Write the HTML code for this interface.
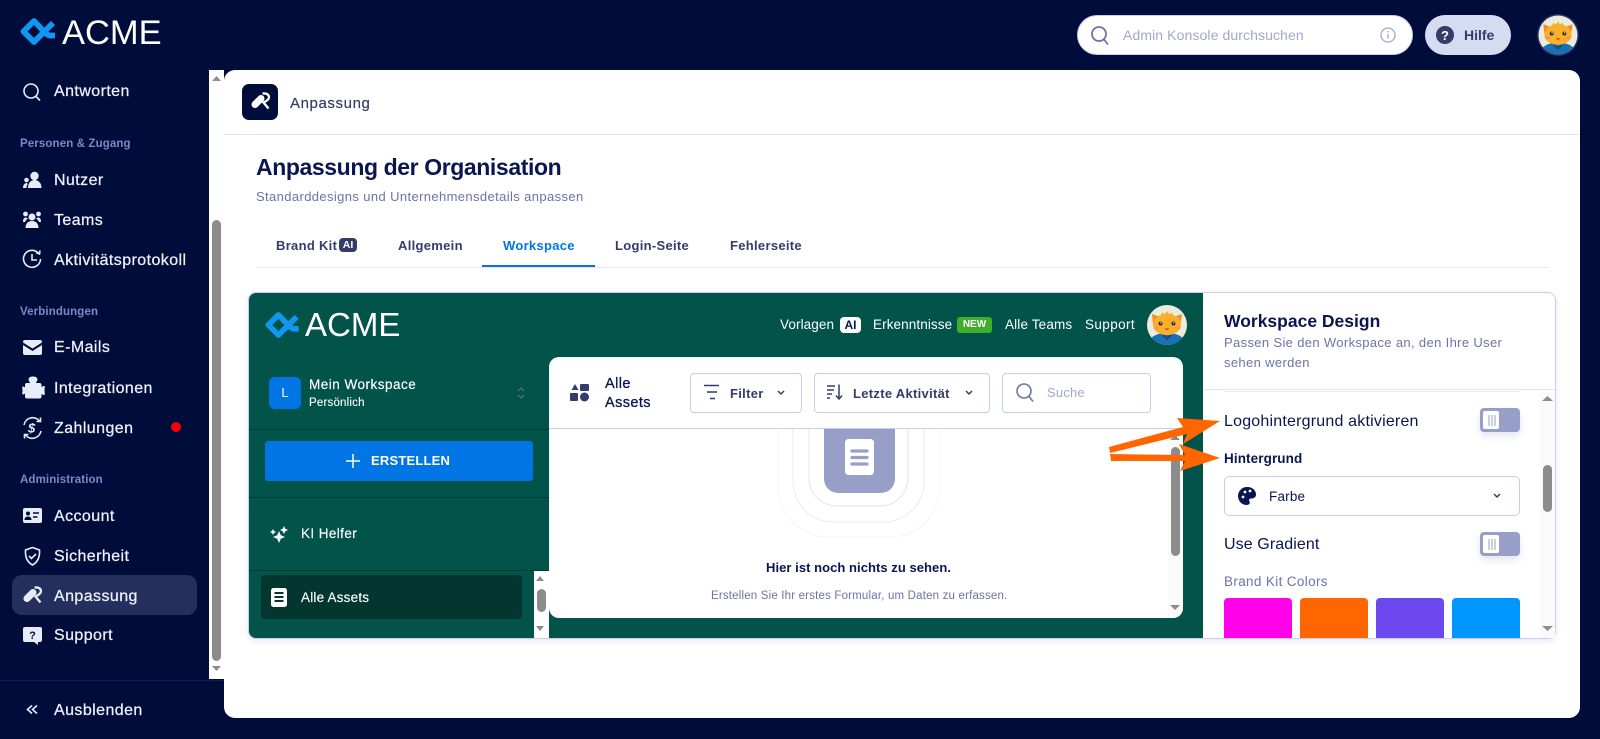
<!DOCTYPE html>
<html lang="de"><head><meta charset="utf-8"><title>Anpassung</title>
<style>
*{box-sizing:border-box}
html,body{margin:0;padding:0;width:1600px;height:739px;overflow:hidden;background:#000c3a;font-family:"Liberation Sans",sans-serif}
.b{position:absolute}
.t{position:absolute;white-space:nowrap;line-height:20px;height:20px}
.n{color:#eef0fa;font-size:16px;letter-spacing:.42px;left:54px;-webkit-text-stroke:.25px #eef0fa}
.s{color:#7d88c9;font-size:11.5px;font-weight:bold;left:20px;letter-spacing:.12px}
.tab{font-size:13px;font-weight:bold;color:#343c6a;letter-spacing:.3px}
.w{color:#fff;font-size:13.5px}
svg.o{position:absolute;left:0;top:0;z-index:5}
</style></head><body>
<!-- main card -->
<div class="b" style="left:224px;top:70px;width:1356px;height:648px;background:#fff;border-radius:11px"></div>
<div class="b" style="left:224px;top:134px;width:1356px;height:1px;background:#e3e7f5"></div>
<div class="b" style="left:209px;top:70px;width:15px;height:609px;background:#fff"></div>
<div class="b" style="left:212px;top:220px;width:9px;height:441px;background:#8c8c8c;border-radius:5px"></div>
<div class="b" style="left:12px;top:575px;width:185px;height:40px;background:#232f5c;border-radius:10px"></div>
<div class="b" style="left:0;top:680px;width:224px;height:1px;background:#0f1c54"></div>
<div class="b" style="left:171px;top:422px;width:10px;height:10px;background:#f00;border-radius:50%"></div>

<!-- sidebar text -->
<div class="t" style="left:62px;top:13px;height:40px;line-height:40px;font-size:34.5px;color:#fff">ACME</div>
<div class="t n" style="top:82px">Antworten</div>
<div class="t s" style="top:134px">Personen &amp; Zugang</div>
<div class="t n" style="top:171px">Nutzer</div>
<div class="t n" style="top:211px">Teams</div>
<div class="t n" style="top:251px">Aktivitätsprotokoll</div>
<div class="t s" style="top:302px">Verbindungen</div>
<div class="t n" style="top:338px">E-Mails</div>
<div class="t n" style="top:379px">Integrationen</div>
<div class="t n" style="top:419px">Zahlungen</div>
<div class="t s" style="top:470px">Administration</div>
<div class="t n" style="top:507px">Account</div>
<div class="t n" style="top:547px">Sicherheit</div>
<div class="t n" style="top:587px">Anpassung</div>
<div class="t n" style="top:626px">Support</div>
<div class="t n" style="top:701px">Ausblenden</div>

<!-- top bar -->
<div class="b" style="left:1077px;top:15px;width:336px;height:40px;background:#fff;border-radius:20px;border:1px solid #c5ceee"></div>
<div class="t" style="left:1123px;top:25px;font-size:14px;color:#a0a8ce;letter-spacing:.1px">Admin Konsole durchsuchen</div>
<div class="b" style="left:1425px;top:15px;width:86px;height:40px;background:#d5dcf1;border-radius:20px"></div>
<div class="t" style="left:1464px;top:25px;font-size:14px;font-weight:bold;color:#343c6a">Hilfe</div>

<!-- card header -->
<div class="b" style="left:242px;top:84px;width:36px;height:36px;background:#000c3a;border-radius:7px"></div>
<div class="t" style="left:290px;top:94px;font-size:15px;color:#343c6a;letter-spacing:.6px;-webkit-text-stroke:.2px #343c6a">Anpassung</div>
<div class="t" style="left:256px;top:153px;height:28px;line-height:28px;font-size:23px;font-weight:bold;color:#0a1551;letter-spacing:-.4px">Anpassung der Organisation</div>
<div class="t" style="left:256px;top:187px;font-size:13px;color:#6c73a8;letter-spacing:.38px">Standarddesigns und Unternehmensdetails anpassen</div>
<div class="t tab" style="left:276px;top:236px">Brand Kit</div>
<div class="b" style="left:339px;top:238px;width:18px;height:14px;background:#343c6a;border-radius:4px;color:#fff;font:bold 10.5px/14px 'Liberation Sans',sans-serif;text-align:center">AI</div>
<div class="t tab" style="left:398px;top:236px">Allgemein</div>
<div class="t tab" style="left:503px;top:236px;color:#0075e3">Workspace</div>
<div class="t tab" style="left:615px;top:236px">Login-Seite</div>
<div class="t tab" style="left:730px;top:236px">Fehlerseite</div>
<div class="b" style="left:256px;top:267px;width:1292px;height:1px;background:#e3e7f5"></div>
<div class="b" style="left:482px;top:265px;width:113px;height:2px;background:#0075e3"></div>

<!-- embedded preview -->
<div class="b" style="left:248px;top:292px;width:1308px;height:347px;background:#fff;border:1px solid #c8ceed;border-radius:8px;box-shadow:0 2px 6px rgba(120,130,190,.18)"></div>
<div class="b" style="left:249px;top:293px;width:954px;height:345px;background:#02544a;border-radius:7px 0 0 7px"></div>
<div class="b" style="left:249px;top:429px;width:300px;height:1px;background:#023a33"></div>
<div class="b" style="left:249px;top:497px;width:300px;height:1px;background:#023a33"></div>
<div class="b" style="left:249px;top:570px;width:300px;height:1px;background:#023a33"></div>
<div class="t" style="left:305px;top:305px;height:40px;line-height:40px;font-size:33px;color:#fff">ACME</div>
<div class="t w" style="left:780px;top:315px;letter-spacing:.1px">Vorlagen</div>
<div class="b" style="left:840px;top:317px;width:21px;height:16px;background:#fff;border-radius:4px;color:#0a1551;font:bold 12px/16px 'Liberation Sans',sans-serif;text-align:center">AI</div>
<div class="t w" style="left:873px;top:315px;letter-spacing:.1px">Erkenntnisse</div>
<div class="b" style="left:957px;top:317px;width:35px;height:16px;background:#3faf2a;border-radius:3px;color:#fff;font:bold 10px/16px 'Liberation Sans',sans-serif;text-align:center">NEW</div>
<div class="t w" style="left:1005px;top:315px;letter-spacing:.15px">Alle Teams</div>
<div class="t w" style="left:1085px;top:315px;letter-spacing:.4px">Support</div>
<div class="b" style="left:269px;top:377px;width:32px;height:32px;background:#0075e3;border-radius:6px;color:#fff;font:13px/32px 'Liberation Sans',sans-serif;text-align:center">L</div>
<div class="t" style="left:309px;top:375px;font-size:13.5px;color:#fff;letter-spacing:.5px;-webkit-text-stroke:.15px #fff">Mein Workspace</div>
<div class="t" style="left:309px;top:393px;font-size:11.5px;color:#fff;letter-spacing:.2px;-webkit-text-stroke:.1px #fff">Persönlich</div>
<div class="b" style="left:265px;top:441px;width:268px;height:40px;background:#0075e3;border-radius:3px"></div>
<div class="t" style="left:371px;top:451px;font-size:13px;font-weight:bold;color:#fff;letter-spacing:.2px">ERSTELLEN</div>
<div class="t" style="left:301px;top:524px;font-size:13.5px;color:#fff;letter-spacing:.4px;-webkit-text-stroke:.15px #fff">KI Helfer</div>
<div class="b" style="left:261px;top:575px;width:261px;height:44px;background:#03362e;border-radius:4px"></div>
<div class="t" style="left:301px;top:588px;font-size:13.5px;color:#fff;letter-spacing:.2px;-webkit-text-stroke:.15px #fff">Alle Assets</div>
<div class="b" style="left:534px;top:571px;width:15px;height:67px;background:#fff"></div>
<div class="b" style="left:537px;top:589px;width:9px;height:23px;background:#8c8c8c;border-radius:5px"></div>

<!-- white inner panel -->
<div class="b" style="left:549px;top:357px;width:634px;height:261px;background:#fff;border-radius:10px"></div>
<div class="b" style="left:549px;top:428px;width:634px;height:1px;background:#c5ceee"></div>
<div class="b" style="left:1168px;top:429px;width:15px;height:189px;background:#fafafa;border-radius:0 0 10px 0"></div>
<div class="b" style="left:1171px;top:447px;width:9px;height:109px;background:#8c8c8c;border-radius:5px"></div>
<div class="t" style="left:605px;top:374px;font-size:14.5px;color:#0a1551;letter-spacing:.4px;-webkit-text-stroke:.3px #0a1551">Alle</div>
<div class="t" style="left:605px;top:393px;font-size:14.5px;color:#0a1551;letter-spacing:.4px;-webkit-text-stroke:.3px #0a1551">Assets</div>
<div class="b" style="left:690px;top:373px;width:112px;height:40px;border:1px solid #c5ceee;border-radius:4px"></div>
<div class="t tab" style="left:730px;top:384px">Filter</div>
<div class="b" style="left:814px;top:373px;width:176px;height:40px;border:1px solid #c5ceee;border-radius:4px"></div>
<div class="t tab" style="left:853px;top:384px">Letzte Aktivität</div>
<div class="b" style="left:1002px;top:373px;width:149px;height:40px;border:1px solid #c5ceee;border-radius:4px"></div>
<div class="t" style="left:1047px;top:383px;font-size:13px;color:#a0a8ce;letter-spacing:.2px">Suche</div>
<div class="t" style="left:766px;top:558px;font-size:13px;font-weight:bold;color:#0a1551;letter-spacing:.05px">Hier ist noch nichts zu sehen.</div>
<div class="t" style="left:711px;top:586px;font-size:11.5px;color:#6c73a8;letter-spacing:.18px">Erstellen Sie Ihr erstes Formular, um Daten zu erfassen.</div>

<!-- right panel -->
<div class="t" style="left:1224px;top:311px;font-size:17.5px;font-weight:bold;color:#0a1551">Workspace Design</div>
<div class="t" style="left:1224px;top:333px;font-size:13px;color:#6c73a8;letter-spacing:.35px">Passen Sie den Workspace an, den Ihre User</div>
<div class="t" style="left:1224px;top:353px;font-size:13px;color:#6c73a8;letter-spacing:.35px">sehen werden</div>
<div class="b" style="left:1204px;top:389px;width:351px;height:1px;background:#dfe3f5"></div>
<div class="b" style="left:1224px;top:391px;width:296px;height:1px;background:#e8ebf6"></div>
<div class="b" style="left:1540px;top:392px;width:15px;height:246px;background:#fafafa"></div>
<div class="b" style="left:1543px;top:465px;width:9px;height:47px;background:#8c8c8c;border-radius:5px"></div>
<div class="t" style="left:1224px;top:412px;font-size:16px;color:#0a1551;letter-spacing:.2px">Logohintergrund aktivieren</div>
<div class="b" style="left:1480px;top:408px;width:40px;height:24px;background:#979fc9;border-radius:4px;box-shadow:0 4px 8px rgba(120,130,190,.2)"></div>
<div class="b" style="left:1483px;top:411px;width:16px;height:18px;background:#fff;border-radius:2px"></div>
<div class="t" style="left:1224px;top:449px;font-size:13.5px;font-weight:bold;color:#0a1551;letter-spacing:.1px">Hintergrund</div>
<div class="b" style="left:1224px;top:476px;width:296px;height:40px;border:1px solid #c5ceee;border-radius:5px;background:#fff"></div>
<div class="t" style="left:1269px;top:487px;font-size:13.5px;color:#0a1551;letter-spacing:.2px">Farbe</div>
<div class="t" style="left:1224px;top:535px;font-size:16px;color:#0a1551;letter-spacing:.1px">Use Gradient</div>
<div class="b" style="left:1480px;top:532px;width:40px;height:24px;background:#979fc9;border-radius:4px;box-shadow:0 4px 8px rgba(120,130,190,.2)"></div>
<div class="b" style="left:1483px;top:535px;width:16px;height:18px;background:#fff;border-radius:2px"></div>
<div class="t" style="left:1224px;top:572px;font-size:13.5px;color:#6c73a8;letter-spacing:.35px">Brand Kit Colors</div>
<div class="b" style="left:1224px;top:598px;width:68px;height:40px;background:#ff00e8;border-radius:4px 4px 0 0"></div>
<div class="b" style="left:1300px;top:598px;width:68px;height:40px;background:#ff6600;border-radius:4px 4px 0 0"></div>
<div class="b" style="left:1376px;top:598px;width:68px;height:40px;background:#6c48ee;border-radius:4px 4px 0 0"></div>
<div class="b" style="left:1452px;top:598px;width:68px;height:40px;background:#0096ff;border-radius:4px 4px 0 0"></div>

<svg class="o" width="1600" height="739" viewBox="0 0 1600 739" xmlns="http://www.w3.org/2000/svg">
<defs>
<clipPath id="av"><circle cx="20" cy="20" r="20"/></clipPath>
<g id="avatar">
<g clip-path="url(#av)">
<rect width="40" height="40" fill="#e9ecdf"/>
<path d="M1 40q2-12 19-12t19 12z" fill="#1a6fb5"/>
<path d="M16 29l4 3 4-3 1 2-5 4-5-4z" fill="#0f4f8a"/>
<path d="M5 9l8 3h14l8-3-1.500 10-5 7H11l-5-7z" fill="#f58a1f"/>
<path d="M20 6l2 3 3-1.500 1 2.500c5 1.500 8 5 8 10 0 6-6.500 10-14 10S6 26 6 20c0-5 3-8.500 8-10l1-2.500 3 1.500z" fill="#fbb02a"/>
<circle cx="13.500" cy="18.500" r="2" fill="#33291f"/><circle cx="26.500" cy="18.500" r="2" fill="#33291f"/>
<circle cx="13.900" cy="17.900" r=".7" fill="#fff"/><circle cx="26.900" cy="17.900" r=".7" fill="#fff"/>
<path d="M17.500 23.500q2.500 3 5 0z" fill="#d0312d"/>
<ellipse cx="9.500" cy="23" rx="3" ry="1.800" fill="#f9905a" opacity=".6"/><ellipse cx="30.500" cy="23" rx="3" ry="1.800" fill="#f9905a" opacity=".6"/>
</g></g>
<path id="logo" d="M53 23 L34 42 L23.500 31.500 L34 21 L45 32.500 Q47.500 35.500 51 35.500 H55" fill="none" stroke="#1296f3" stroke-width="5.800" stroke-linejoin="round"/>
<g id="roller"><path d="M27 598.500L33 592.500" stroke="currentColor" stroke-width="7" stroke-linecap="round" fill="none"/><path d="M34.500 587.500q6-.5 6.500 3.500q0 3-5.500 5.500l5 6" fill="none" stroke="currentColor" stroke-width="2.300"/></g>
</defs>

<!-- logos -->
<use href="#logo"/>
<use href="#logo" transform="translate(265 312) scale(.96) translate(-20 -18)"/>

<!-- sidebar scroll arrows -->
<path d="M212 81l4.500-5 4.500 5zM212 666l4.500 5 4.500-5z" fill="#8c8c8c"/>

<g fill="#e8ebf8" stroke="none">
<!-- search -->
<g fill="none" stroke="#e8ebf8" stroke-width="1.600"><circle cx="31" cy="91" r="7"/><path d="M36 96.500l4 4"/></g>
<!-- nutzer -->
<circle cx="34.500" cy="176" r="4.200"/><path d="M28 188c0-5.500 3-8 6.500-8s7 2.500 7 8z"/><circle cx="26.500" cy="180" r="2.300"/><path d="M23 188c0-3 1.500-5 3.800-5l1 1c-1 1-1.300 2.500-1.300 4z"/>
<!-- teams -->
<circle cx="32" cy="217" r="3.500"/><circle cx="25.500" cy="214" r="2.400"/><circle cx="38.500" cy="214" r="2.400"/><path d="M25.500 228c0-5 3-7 6.500-7s6.500 2 6.500 7z"/><path d="M23 222c0-3 1-4.500 3-4.500l2 1c-1.500 1-2.500 2-3 3.500zM41 222c0-3-1-4.500-3-4.500l-2 1c1.500 1 2.500 2 3 3.500z"/>
<!-- clock -->
<g fill="none" stroke="#e8ebf8" stroke-width="1.600"><path d="M39 254a8.500 8.500 0 1 0 1.500 5"/><path d="M32 254v6h5"/><path d="M36 252.500l3.500 1.500.5-3.500"/></g>
<!-- mail -->
<path d="M25 340h15a2 2 0 0 1 2 2v.500l-9.500 6-9.500-6V342a2 2 0 0 1 2-2zM23 345l9.500 6 9.500-6v8a2 2 0 0 1-2 2H25a2 2 0 0 1-2-2z"/>
<!-- puzzle -->
<path d="M30 383c-.5-1.500-1.500-2.500-1.500-3.500 0-2 2-3 4.500-3s4.500 1 4.500 3c0 1-1 2-1.500 3.500h3.500a2 2 0 0 1 2 2v2c1-.8 2-1 2.500-1 1.500 0 .5 3 .5 4.500s1 4.500-.5 4.500c-.5 0-1.500-.3-2.500-1v2.500a2 2 0 0 1-2 2H27a2 2 0 0 1-2-2v-3c-1 .7-1.500 1-2 1-1.500 0-.5-2.500-.5-4s-1-4 .5-4c.5 0 1 .3 2 1v-2.500a2 2 0 0 1 2-2z"/>
<!-- zahlungen -->
<g fill="none" stroke="#e8ebf8" stroke-width="1.600"><path d="M24 425a8.800 8.800 0 0 1 15.500-4"/><path d="M41 431a8.800 8.800 0 0 1-15.500 4"/><path d="M40.500 417.500v4h-4M24.500 438.500v-4h4"/></g>
<text x="28" y="432.500" font-family="Liberation Sans,sans-serif" font-weight="bold" font-style="italic" font-size="13" fill="#e8ebf8">$</text>
<!-- account -->
<path fill-rule="evenodd" d="M25 508h15a2 2 0 0 1 2 2v11a2 2 0 0 1-2 2H25a2 2 0 0 1-2-2v-11a2 2 0 0 1 2-2z"/>
<circle cx="28" cy="513.500" r="2" fill="#000c3a"/><path d="M24.500 520c0-2.500 1.500-3.500 3.500-3.500s3.500 1 3.500 3.500z" fill="#000c3a"/><path d="M33 513h6M33 517h4.500" stroke="#000c3a" stroke-width="1.400"/>
<!-- shield -->
<g fill="none" stroke="#e8ebf8" stroke-width="1.600"><path d="M32.500 547.500l7 2.500c.5 7-1.500 12-7 15-5.500-3-7.500-8-7-15z"/><path d="M29 556l2.500 2.500 4.500-4.500"/></g>
<!-- support -->
<path d="M25 627h15a2 2 0 0 1 2 2v11a2 2 0 0 1-2 2h-2v3l-4-3h-9a2 2 0 0 1-2-2v-11a2 2 0 0 1 2-2z"/>
<text x="32.500" y="639" text-anchor="middle" font-family="Liberation Sans,sans-serif" font-weight="bold" font-size="11" fill="#000c3a">?</text>
<!-- ausblenden -->
<g fill="none" stroke="#e8ebf8" stroke-width="1.600"><path d="M32 705.500l-4.500 4 4.500 4M37 705.500l-4.500 4 4.500 4"/></g>
</g>
<!-- roller icons -->
<use href="#roller" style="color:#e8ebf8"/>
<use href="#roller" transform="translate(228 -494)" style="color:#fff"/>

<!-- top bar icons -->
<g fill="none" stroke="#6c73a8" stroke-width="1.800"><circle cx="1099" cy="34" r="7"/><path d="M1104 39.500l4 5"/></g>
<g fill="none" stroke="#a0a8ce" stroke-width="1.300"><circle cx="1388" cy="35" r="7"/><path d="M1388 34v4.500"/><path d="M1388 31v1.500"/></g>
<circle cx="1445" cy="35" r="9" fill="#343c6a"/>
<text x="1445" y="40" text-anchor="middle" font-family="Liberation Sans,sans-serif" font-weight="bold" font-size="13" fill="#fff">?</text>
<circle cx="1558" cy="35" r="21" fill="#2b2f64"/>
<use href="#avatar" transform="translate(1538.500 15.500) scale(.975)"/>
<use href="#avatar" transform="translate(1147 305)"/>

<!-- preview left icons -->
<path d="M518 391l3-3 3 3M518 395l3 3 3-3" fill="none" stroke="#4f6a8a" stroke-width="1.300"/>
<path d="M353 454v14M346 461h14" stroke="#fff" stroke-width="1.500"/>
<g fill="#fff"><path d="M279 531l1.800 4.200 4.200 1.800-4.200 1.800-1.800 4.200-1.800-4.200-4.200-1.800 4.200-1.800z"/><path d="M284 526l1.300 2.700 2.700 1.300-2.700 1.300-1.300 2.700-1.300-2.700-2.700-1.300 2.700-1.300z"/><path d="M273 529l1 2 2 1-2 1-1 2-1-2-2-1 2-1z"/></g>
<rect x="271" y="588" width="16" height="19" rx="2.500" fill="#fff"/><path d="M274.500 593h9M274.500 597h9M274.500 601h9" stroke="#03362e" stroke-width="2"/>
<path d="M536 581l4-5 4 5zM536 626l4 5 4-5z" fill="#8c8c8c"/>

<!-- panel header icons -->
<g fill="#343c6a"><path d="M575 384l3.500 6h-7z"/><rect x="580" y="384" width="9" height="7" rx="1"/><rect x="570" y="393" width="8" height="8" rx="1"/><circle cx="584.500" cy="397" r="4.500"/></g>
<path d="M704 385.500h15M707 392h10M710 398.500h5" stroke="#343c6a" stroke-width="1.600" fill="none"/>
<path d="M778 391l3 3 3-3M966 391l3 3 3-3" stroke="#343c6a" stroke-width="1.500" fill="none"/>
<path d="M827 386h8M827 390h7M827 394h5M827 398h3M839 384.500v14M836 395.500l3 3.500 3-3.500" stroke="#343c6a" stroke-width="1.500" fill="none"/>
<g fill="none" stroke="#6c73a8" stroke-width="1.600"><circle cx="1024" cy="391" r="7"/><path d="M1029 396.500l4 5"/></g>

<!-- illustration -->
<g fill="none">
<path d="M778 429v58a50 50 0 0 0 50 50h62a50 50 0 0 0 50-50v-58" stroke="#f4f5fb"/>
<path d="M793 429v53a40 40 0 0 0 40 40h51a40 40 0 0 0 40-40v-53" stroke="#e8ebf7"/>
<path d="M809 429v49a28 28 0 0 0 28 28h43a28 28 0 0 0 28-28v-49" stroke="#dfe3f5"/>
</g>
<path d="M824 429h71v50a14 14 0 0 1-14 14h-43a14 14 0 0 1-14-14z" fill="#979fc9"/>
<rect x="845" y="439" width="29" height="36" rx="3.500" fill="#fff"/>
<path d="M852 451h15M852 457.500h15M852 464h15" stroke="#979fc9" stroke-width="3.200" stroke-linecap="round"/>
<path d="M1170 440l5-5 5 5zM1170 605l5 5 5-5z" fill="#8c8c8c"/>

<!-- right panel icons -->
<path d="M1542 401l5.500-5 5.500 5zM1542 626l5.500 5 5.500-5z" fill="#8c8c8c"/>
<path d="M1489 415v11M1492 415v11M1495 415v11M1489 539v11M1492 539v11M1495 539v11" stroke="#979fc9" stroke-width="1"/>
<path d="M1238 496a9 9 0 0 1 9.500-9c5 0 8.500 3.500 8.500 7.500 0 3-2.500 4-4.500 4-2 0-3 1-2 3 1 2-.5 3.500-3 3.500-5 0-8.500-4.500-8.500-9z" fill="#0a1551"/>
<circle cx="1243" cy="497" r="1.400" fill="#fff"/><circle cx="1245" cy="492" r="1.400" fill="#fff"/><circle cx="1250" cy="491" r="1.400" fill="#fff"/>
<path d="M1494 494l3 3 3-3" stroke="#343c6a" stroke-width="1.500" fill="none"/>

<!-- orange arrows -->
<path d="M1109 447L1183 427 1177 418 1220 421 1183 444 1187 434 1110 453z" fill="#ff6600"/>
<path d="M1110 454L1185 455 1179 444 1220 458 1180 471 1185 461 1111 461z" fill="#ff6600"/>
</svg>
</body></html>
